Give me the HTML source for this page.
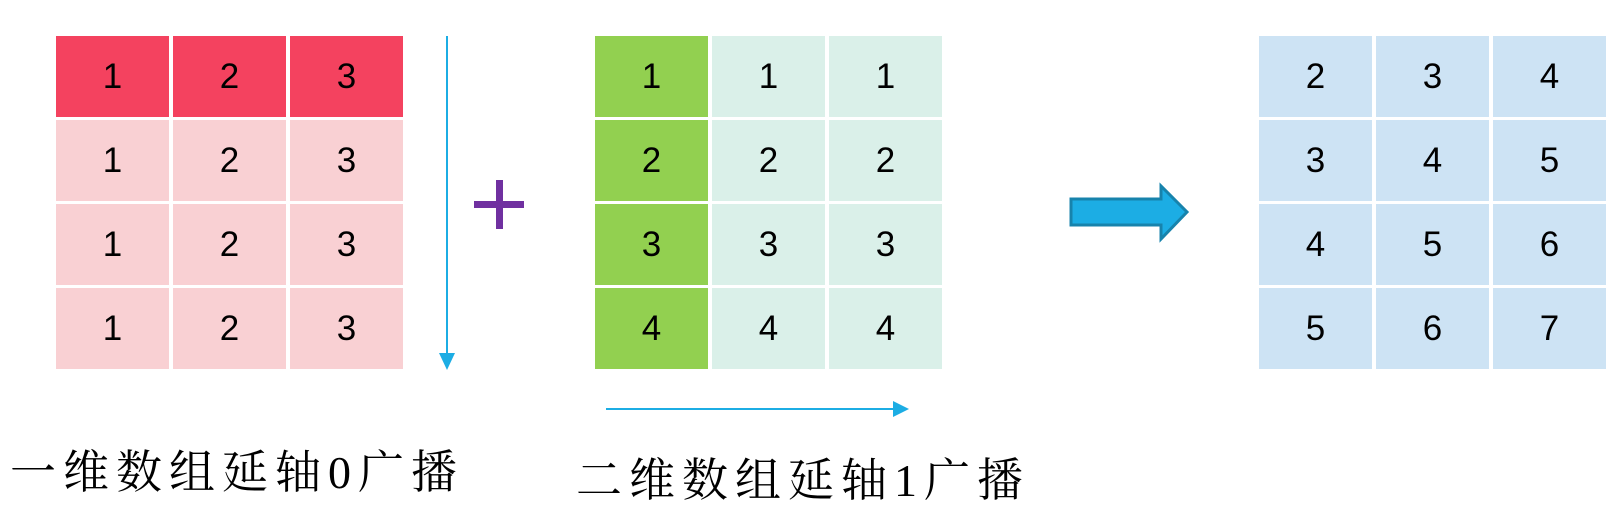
<!DOCTYPE html>
<html><head><meta charset="utf-8"><style>
body{margin:0;width:1621px;height:517px;background:#fff;position:relative;overflow:hidden;font-family:"Liberation Sans",sans-serif}
.c{position:absolute;width:113px;height:81px;display:flex;align-items:center;justify-content:center;font-size:35px;color:#000}
.t{position:absolute;font-family:"Liberation Serif","Noto Serif CJK SC",serif;font-size:46px;letter-spacing:7px;color:#000;white-space:nowrap}
</style></head><body>
<div id="g"></div>
<script>
const g=document.getElementById('g');
function tbl(x0,vals,colf){
 for(let r=0;r<4;r++)for(let c=0;c<3;c++){
  const d=document.createElement('div');d.className='c';
  d.style.left=(x0+c*117)+'px';d.style.top=(36+r*84)+'px';
  d.style.background=colf(r,c);d.textContent=vals[r][c];g.appendChild(d);
 }
}
tbl(56,[[1,2,3],[1,2,3],[1,2,3],[1,2,3]],(r,c)=>r==0?'#F4425F':'#F9D0D3');
tbl(595,[[1,1,1],[2,2,2],[3,3,3],[4,4,4]],(r,c)=>c==0?'#92D050':'#DAF0E9');
tbl(1259,[[2,3,4],[3,4,5],[4,5,6],[5,6,7]],()=>'#CDE3F4');
</script>
<svg width="1621" height="517" style="position:absolute;left:0;top:0">
<line x1="447" y1="36" x2="447" y2="356" stroke="#1CADE4" stroke-width="2"/>
<polygon points="439,353 455,353 447,370" fill="#1CADE4"/>
<line x1="606" y1="409" x2="895" y2="409" stroke="#1CADE4" stroke-width="2"/>
<polygon points="893,401 893,417 909,409" fill="#1CADE4"/>
<rect x="474" y="201" width="50" height="7" fill="#7030A0"/>
<rect x="496" y="180" width="7" height="49" fill="#7030A0"/>
<polygon points="1071,199 1161,199 1161,186 1187,212 1161,239 1161,225 1071,225" fill="#1CADE4" stroke="#1783AC" stroke-width="3"/>
</svg>
<div class="t" style="left:10px;top:436px">一维数组延轴0广播</div>
<div class="t" style="left:576px;top:444px">二维数组延轴1广播</div>
</body></html>
